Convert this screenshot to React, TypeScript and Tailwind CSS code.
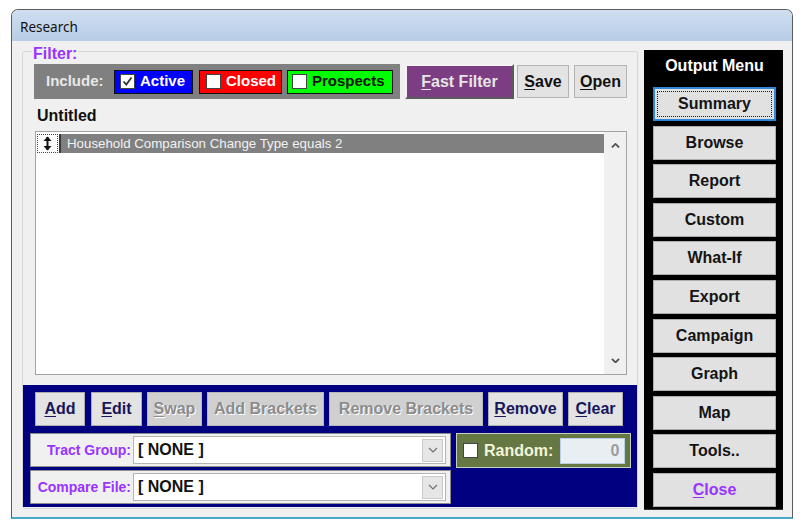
import React from 'react';

const menuItems = ['Summary', 'Browse', 'Report', 'Custom', 'What-If', 'Export', 'Campaign', 'Graph', 'Map', 'Tools..'];

function CheckBox({ checked }: { checked?: boolean }) {
  return (
    <span className="w-[15px] h-[15px] shrink-0 bg-white border border-[#444] flex items-center justify-center">
      {checked && (
        <svg width="11" height="11" viewBox="0 0 11 11">
          <path d="M1.5 5.5 L4.3 8.5 L9.5 1.5" fill="none" stroke="#333" strokeWidth="1.8" />
        </svg>
      )}
    </span>
  );
}

function Chevron({ up, size = 9, color = '#555', width = 2 }: { up?: boolean; size?: number; color?: string; width?: number }) {
  return (
    <svg width={size} height={size * 0.6} viewBox="0 0 10 6">
      <path d={up ? 'M1 5 L5 1 L9 5' : 'M1 1 L5 5 L9 1'} fill="none" stroke={color} strokeWidth={width} />
    </svg>
  );
}

function ToolButton({ className, disabled, children }: { className: string; disabled?: boolean; children: React.ReactNode }) {
  return (
    <div
      className={`${className} h-[34px] flex items-center justify-center border text-[16px] font-bold ${
        disabled
          ? 'bg-[#d0d0d0] border-[#b8b8b8] text-[#8c8c8c] [text-shadow:1px_1px_0_#ffffff]'
          : 'bg-[#e3e3e3] border-[#adadad] text-[#17175c]'
      }`}
    >
      {children}
    </div>
  );
}

function ComboRow({ label }: { label: string }) {
  return (
    <div className="w-[421px] h-[34px] flex items-center bg-[#f0f0f0] border border-[#8c8c8c]">
      <div className="w-[101px] pr-[1px] text-right whitespace-nowrap text-[14px] font-bold text-[#9933ff]">{label}</div>
      <div className="ml-[1px] w-[313px] h-[28px] flex items-center bg-white border border-[#b4b4b4] pl-[4px] pr-[2px]">
        <span className="flex-1 text-[16px] font-bold text-[#111]">[ NONE ]</span>
        <span className="w-[21px] h-[23px] flex items-center justify-center bg-[#e6e6e6] border border-[#cacaca]">
          <Chevron size={10} color="#707070" width={1.2} />
        </span>
      </div>
    </div>
  );
}

export default function App() {
  return (
    <div className="w-[809px] h-[529px] bg-white pt-[9px] pl-[11px] font-['Liberation_Sans',Arial,sans-serif]">
      <div className="w-[782px] h-[510px] flex flex-col border-l border-t border-r border-[#5c5c5c] border-b-2 border-b-[#48a9c5] rounded-t-[7px] overflow-hidden">
        {/* title bar */}
        <div className="h-[31px] shrink-0 flex items-center pl-[8px] pt-[3px] bg-linear-to-b from-[#d0def0] to-[#b7cde6] font-['Noto_Sans','Open_Sans',sans-serif] text-[13.5px] text-[#111]">
          Research
        </div>

        <div className="flex-1 flex bg-[#f0f0f0] pl-[10px] pt-[9px] pr-[9px]">
          {/* filter group */}
          <div className="relative mt-[1px] w-[616px] h-[458px] flex flex-col border border-[#d6d6d6] rounded-[3px]">
            <span className="absolute left-[9px] top-[-7px] px-[1px] bg-[#f0f0f0] text-[16px] leading-[18px] font-bold text-[#9933ff]">
              Filter:
            </span>

            <div className="pt-[12px] pl-[11px]">
              <div className="flex items-start">
                <div className="w-[366px] h-[35px] flex items-center bg-[#808080] pl-[12px]">
                  <span className="w-[68px] text-[15px] font-bold text-[#e8e8e8]">Include:</span>
                  <div className="w-[79px] h-[24px] flex items-center gap-[5px] px-[5px] bg-[#0000ff] border border-[#111]">
                    <CheckBox checked />
                    <span className="text-[15px] font-bold text-white">Active</span>
                  </div>
                  <div className="ml-[6px] w-[83px] h-[24px] flex items-center gap-[5px] px-[6px] bg-[#ff0000] border border-[#111]">
                    <CheckBox />
                    <span className="text-[15px] font-bold text-white">Closed</span>
                  </div>
                  <div className="ml-[5px] w-[106px] h-[24px] flex items-center gap-[5px] px-[4px] bg-[#00ff00] border border-[#111]">
                    <CheckBox />
                    <span className="text-[15px] font-bold text-[#111]">Prospects</span>
                  </div>
                </div>
                <div className="ml-[5px] w-[109px] h-[35px] flex items-center justify-center bg-[#7d3d82] border-2 border-t-[#f4f4f4] border-l-[#f4f4f4] border-r-[#5a5a5a] border-b-[#5a5a5a] text-[16px] font-bold text-[#e6e6e6]">
                  <span className="underline underline-offset-[2px]">F</span>ast Filter
                </div>
                <div className="ml-[3px] mt-[1px] w-[52px] h-[33px] flex items-center justify-center bg-[#e3e3e3] border border-[#b4b4b4] text-[16px] font-bold text-[#111]">
                  <span className="underline underline-offset-[2px]">S</span>ave
                </div>
                <div className="ml-[5px] mt-[1px] w-[53px] h-[33px] flex items-center justify-center bg-[#e3e3e3] border border-[#b4b4b4] text-[16px] font-bold text-[#111]">
                  <span className="underline underline-offset-[2px]">O</span>pen
                </div>
              </div>

              <div className="mt-[8px] ml-[3px] h-[18px] leading-[18px] text-[16px] font-bold text-[#111]">Untitled</div>

              {/* criteria list */}
              <div className="mt-[6px] ml-[1px] w-[592px] h-[244px] flex bg-white border border-[#a3a3a3]">
                <div className="flex-1 pt-[2px] pl-[1px]">
                  <div className="flex h-[19px]">
                    <div className="w-[21px] flex items-center justify-center bg-white border border-dotted border-[#444]">
                      <svg width="9" height="15" viewBox="0 0 9 15">
                        <path d="M4.5 1 V14" stroke="#111" strokeWidth="2" />
                        <path d="M0.5 5 L4.5 0.5 L8.5 5 Z" fill="#111" />
                        <path d="M0.5 10 L4.5 14.5 L8.5 10 Z" fill="#111" />
                      </svg>
                    </div>
                    <div className="flex-1 ml-[1px] flex items-center pl-[6px] bg-[#808080] border-l-2 border-[#3a3a3a] text-[13.3px] text-[#f2f2f2]">
                      Household Comparison Change Type equals 2
                    </div>
                  </div>
                </div>
                <div className="w-[22px] flex flex-col items-center justify-between bg-[#f0f0f0] py-[11px]">
                  <Chevron up />
                  <Chevron />
                </div>
              </div>
            </div>

            {/* edit panel */}
            <div className="mt-[10px] h-[122px] bg-[#000080] pt-[7px]">
              <div className="flex gap-[5px] pl-[12px]">
                <ToolButton className="w-[50px]">
                  <span className="underline underline-offset-[2px]">A</span>dd
                </ToolButton>
                <ToolButton className="ml-[1px] w-[51px]">
                  <span className="underline underline-offset-[2px]">E</span>dit
                </ToolButton>
                <ToolButton className="w-[55px]" disabled>
                  <span className="underline underline-offset-[2px]">S</span>wap
                </ToolButton>
                <ToolButton className="w-[117px]" disabled>
                  Add Brackets
                </ToolButton>
                <ToolButton className="w-[154px]" disabled>
                  Remove Brackets
                </ToolButton>
                <ToolButton className="w-[75px]">
                  <span className="underline underline-offset-[2px]">R</span>emove
                </ToolButton>
                <ToolButton className="w-[55px]">
                  <span className="underline underline-offset-[2px]">C</span>lear
                </ToolButton>
              </div>

              <div className="flex mt-[7px] pl-[7px]">
                <div className="flex flex-col gap-[3px]">
                  <ComboRow label="Tract Group:" />
                  <ComboRow label="Compare File:" />
                </div>
                <div className="ml-[5px] w-[175px] h-[35px] flex items-center bg-[#657843] border border-[#c9cfbf] pl-[6px]">
                  <CheckBox />
                  <span className="ml-[6px] text-[16px] font-bold text-[#f4f4d8]">Random:</span>
                  <div className="ml-[7px] w-[65px] h-[26px] flex items-center justify-end pr-[5px] bg-[#e9eef3] border border-[#b9cee2] text-[16px] font-bold text-[#9c9c9c]">
                    0
                  </div>
                </div>
              </div>
            </div>
          </div>

          {/* output menu */}
          <div className="ml-[6px] w-[139px] h-[460px] flex flex-col bg-black border-b border-[#333] pl-[9px] pr-[7px] pt-[7px]">
            <div className="h-[18px] leading-[18px] text-center text-[16px] font-bold text-white">Output Menu</div>
            <div className="mt-[12px] flex flex-col gap-[4.6px]">
              {menuItems.map((item, i) => (
                <div
                  key={item}
                  className={`relative h-[34px] flex items-center justify-center bg-[#e1e1e1] text-[16px] font-bold text-[#141414] ${
                    i === 0 ? 'border-2 border-[#2f86dc]' : 'border border-[#adadad]'
                  }`}
                >
                  {i === 0 && <span className="absolute inset-[2px] border border-dotted border-[#222]" />}
                  {item}
                </div>
              ))}
              <div className="h-[34px] flex items-center justify-center bg-[#e1e1e1] border border-[#adadad] text-[16px] font-bold text-[#9933ff]">
                <span className="underline underline-offset-[2px]">C</span>lose
              </div>
            </div>
          </div>
        </div>
      </div>
    </div>
  );
}
